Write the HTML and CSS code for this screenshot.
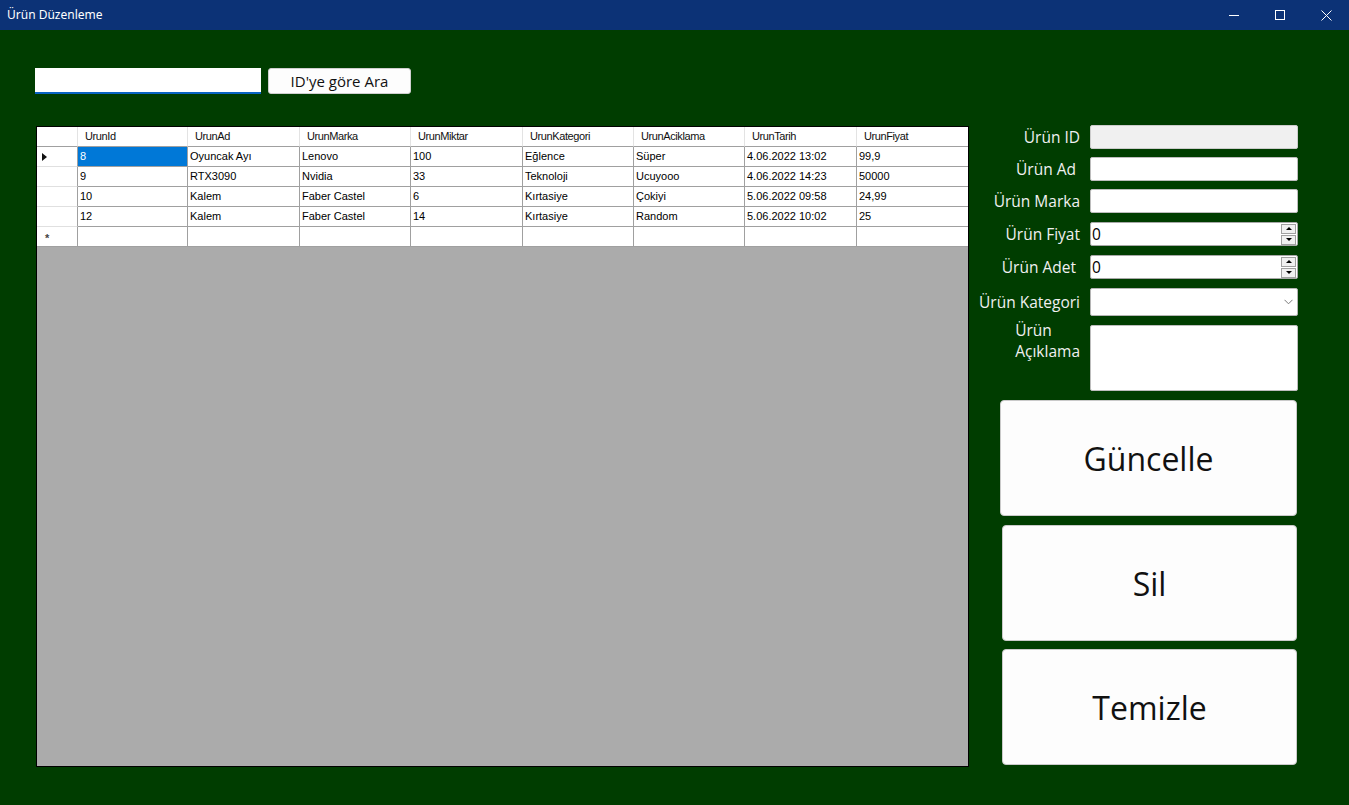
FILE: index.html
```html
<!DOCTYPE html>
<html lang="tr">
<head>
<meta charset="utf-8">
<title>Ürün Düzenleme</title>
<link rel="stylesheet" href="styles.css">
</head>
<body>
<div class="window">
  <div class="titlebar">
    <span class="title">Ürün Düzenleme</span>
    <div class="controls">
      <span class="ctl"><svg width="10" height="10" viewBox="0 0 10 10"><line x1="0" y1="5.5" x2="10" y2="5.5" stroke="#fff" stroke-width="1"/></svg></span>
      <span class="ctl"><svg width="10" height="10" viewBox="0 0 10 10"><rect x="0.5" y="0.5" width="9" height="9" fill="none" stroke="#fff" stroke-width="1"/></svg></span>
      <span class="ctl"><svg width="11" height="11" viewBox="0 0 11 11"><path d="M0.5 0.5 L10.5 10.5 M10.5 0.5 L0.5 10.5" stroke="#fff" stroke-width="1"/></svg></span>
    </div>
  </div>
  <div class="content">
    <div class="searchbar">
      <div class="search-input"></div>
      <button class="search-btn">ID'ye göre Ara</button>
    </div>
    <div class="main">
      <div class="datagrid">
        <div class="row head">
          <div class="cell rh"></div>
          <div class="cell hc">UrunId</div>
          <div class="cell hc">UrunAd</div>
          <div class="cell hc">UrunMarka</div>
          <div class="cell hc">UrunMiktar</div>
          <div class="cell hc">UrunKategori</div>
          <div class="cell hc">UrunAciklama</div>
          <div class="cell hc">UrunTarih</div>
          <div class="cell hc">UrunFiyat</div>
        </div>
        <div class="row">
          <div class="cell rh"><span class="tri"></span></div>
          <div class="cell sel">8</div>
          <div class="cell">Oyuncak Ayı</div>
          <div class="cell">Lenovo</div>
          <div class="cell">100</div>
          <div class="cell">Eğlence</div>
          <div class="cell">Süper</div>
          <div class="cell">4.06.2022 13:02</div>
          <div class="cell">99,9</div>
        </div>
        <div class="row">
          <div class="cell rh"></div>
          <div class="cell">9</div>
          <div class="cell">RTX3090</div>
          <div class="cell">Nvidia</div>
          <div class="cell">33</div>
          <div class="cell">Teknoloji</div>
          <div class="cell">Ucuyooo</div>
          <div class="cell">4.06.2022 14:23</div>
          <div class="cell">50000</div>
        </div>
        <div class="row">
          <div class="cell rh"></div>
          <div class="cell">10</div>
          <div class="cell">Kalem</div>
          <div class="cell">Faber Castel</div>
          <div class="cell">6</div>
          <div class="cell">Kırtasiye</div>
          <div class="cell">Çokiyi</div>
          <div class="cell">5.06.2022 09:58</div>
          <div class="cell">24,99</div>
        </div>
        <div class="row">
          <div class="cell rh"></div>
          <div class="cell">12</div>
          <div class="cell">Kalem</div>
          <div class="cell">Faber Castel</div>
          <div class="cell">14</div>
          <div class="cell">Kırtasiye</div>
          <div class="cell">Random</div>
          <div class="cell">5.06.2022 10:02</div>
          <div class="cell">25</div>
        </div>
        <div class="row">
          <div class="cell rh"><span class="star">*</span></div>
          <div class="cell"></div>
          <div class="cell"></div>
          <div class="cell"></div>
          <div class="cell"></div>
          <div class="cell"></div>
          <div class="cell"></div>
          <div class="cell"></div>
          <div class="cell"></div>
        </div>
      </div>

      <div class="side">
        <div class="field f-id">
          <label class="lbl">Ürün ID</label>
          <div class="box disabled"></div>
        </div>
        <div class="field f-ad">
          <label class="lbl pad">Ürün Ad</label>
          <div class="box"></div>
        </div>
        <div class="field f-marka">
          <label class="lbl">Ürün Marka</label>
          <div class="box"></div>
        </div>
        <div class="field f-fiyat">
          <label class="lbl">Ürün Fiyat</label>
          <div class="box num">
            <span class="val">0</span>
            <span class="spin">
              <span class="sb"><span class="up"></span></span>
              <span class="sb"><span class="dn"></span></span>
            </span>
          </div>
        </div>
        <div class="field f-adet">
          <label class="lbl pad">Ürün Adet</label>
          <div class="box num">
            <span class="val">0</span>
            <span class="spin">
              <span class="sb"><span class="up"></span></span>
              <span class="sb"><span class="dn"></span></span>
            </span>
          </div>
        </div>
        <div class="field f-kat">
          <label class="lbl">Ürün Kategori</label>
          <div class="box combo">
            <svg width="9" height="6" viewBox="0 0 9 6"><path d="M0.5 0.8 L4.5 4.8 L8.5 0.8" fill="none" stroke="#7a7a7a" stroke-width="1"/></svg>
          </div>
        </div>
        <div class="field f-acik">
          <label class="lbl multi">Ürün<br>Açıklama</label>
          <div class="box area"></div>
        </div>
        <button class="big b-guncelle">Güncelle</button>
        <button class="big b-sil">Sil</button>
        <button class="big b-temizle">Temizle</button>
      </div>
    </div>
  </div>
</div>
</body>
</html>
```

FILE: styles.css
```css
* { box-sizing: border-box; }

html, body {
  margin: 0;
  padding: 0;
  width: 1349px;
  height: 805px;
  overflow: hidden;
  background: #003d00;
  font-family: "Open Sans", "Noto Sans", sans-serif;
}

.window {
  width: 1349px;
  height: 805px;
  background: #003d00;
}

.titlebar {
  height: 30px;
  background: #0c3276;
  display: flex;
  align-items: center;
  justify-content: space-between;
  color: #fff;
}

.title {
  padding-left: 7px;
  font-family: "Noto Sans", "DejaVu Sans", sans-serif;
  font-size: 12px;
  line-height: 30px;
}

.controls {
  display: flex;
  height: 30px;
}

.ctl {
  width: 46px;
  height: 30px;
  display: flex;
  align-items: center;
  justify-content: center;
}

.content {
  padding-left: 35px;
}

.searchbar {
  display: flex;
  align-items: flex-start;
  margin-top: 38px;
}

.search-input {
  width: 226px;
  height: 26px;
  background: #fff;
  border-bottom: 2px solid #0a63c4;
}

.search-btn {
  margin-left: 7px;
  width: 143px;
  height: 26px;
  background: #fdfdfd;
  border: 1px solid #cfcfcf;
  border-radius: 3px;
  font-family: "Open Sans", sans-serif;
  font-size: 15px;
  color: #111;
  padding: 0;
  line-height: 24px;
}

.main {
  display: flex;
  align-items: flex-start;
  margin-top: 31px;
}

/* Data grid */
.datagrid {
  margin-left: 1px;
  margin-top: 1px;
  width: 933px;
  height: 641px;
  border: 1px solid #000;
  background: #ababab;
  font-family: "Liberation Sans", Arial, sans-serif;
  font-size: 11px;
  color: #000;
}

.row {
  display: grid;
  grid-template-columns: 41px 110px 112px 111px 112px 111px 111px 112px 111px;
  height: 20px;
  background: #fff;
}

.cell {
  height: 20px;
  border-right: 1px solid #a0a0a0;
  border-bottom: 1px solid #a0a0a0;
  padding-left: 2px;
  line-height: 19px;
  white-space: nowrap;
  overflow: hidden;
}

.cell:last-child {
  border-right: none;
}

.head .cell {
  border-right-color: #e3e3e3;
  border-bottom-color: #a0a0a0;
}

.head .hc {
  padding-left: 7px;
  letter-spacing: -0.4px;
  color: #101010;
}

.rh {
  border-bottom-color: #e0e0e0;
  border-right-color: #a0a0a0;
  position: relative;
}

.row:nth-last-child(1) .rh {
  border-bottom-color: #a0a0a0;
}

.sel {
  background: #0078d7;
  color: #fff;
}

.tri {
  position: absolute;
  left: 5px;
  top: 6px;
  width: 0;
  height: 0;
  border-top: 4px solid transparent;
  border-bottom: 4px solid transparent;
  border-left: 5px solid #111;
}

.star {
  position: absolute;
  left: 8px;
  top: 2px;
  color: #444;
  font-size: 11px;
  font-weight: bold;
}

/* Side panel */
.side {
  margin-left: 3px;
  width: 326px;
  display: flex;
  flex-direction: column;
}

.field {
  display: flex;
  align-items: center;
}

.lbl {
  width: 108px;
  text-align: right;
  color: #f0f0f0;
  font-size: 15.5px;
  white-space: nowrap;
  margin-right: 10px;
}

.lbl.pad {
  padding-right: 4px;
}

.box {
  width: 208px;
  height: 24px;
  background: #fff;
  border: 1px solid #bdbdbd;
  border-radius: 2px;
}

.box.disabled {
  background: #f0f0f0;
  border-color: #cccccc;
}

.f-id, .f-ad { margin-bottom: 8px; }
.f-marka { margin-bottom: 9px; }
.f-fiyat, .f-adet { margin-bottom: 9px; }
.f-kat { margin-bottom: 9px; }
.f-acik { margin-bottom: 9px; align-items: flex-start; }

.box.num {
  display: flex;
  align-items: center;
  justify-content: space-between;
  border-color: #a8a8a8;
}

.val {
  padding-left: 1px;
  font-size: 15.5px;
  color: #000;
  line-height: 22px;
}

.spin {
  display: flex;
  flex-direction: column;
  margin-right: 1px;
  gap: 1px;
}

.sb {
  width: 15px;
  height: 10px;
  background: #f0f0f0;
  border: 1px solid #a0a0a0;
  display: flex;
  align-items: center;
  justify-content: center;
}

.up {
  width: 0;
  height: 0;
  border-left: 3px solid transparent;
  border-right: 3px solid transparent;
  border-bottom: 3px solid #000;
}

.dn {
  width: 0;
  height: 0;
  border-left: 3px solid transparent;
  border-right: 3px solid transparent;
  border-top: 3px solid #000;
}

.box.combo {
  height: 28px;
  display: flex;
  align-items: center;
  justify-content: flex-end;
  padding-right: 4px;
  border-color: #b5b5b5;
}

.box.area {
  height: 66px;
}

.lbl.multi {
  display: flex;
  justify-content: flex-end;
  text-align: left;
  line-height: 21px;
  margin-top: -5px;
}

.big {
  height: 116px;
  background: #fdfdfd;
  border: 1px solid #cacaca;
  border-radius: 4px;
  font-family: "Open Sans", sans-serif;
  font-size: 32px;
  color: #111;
  padding: 0;
}

.b-guncelle {
  margin-left: 28px;
  width: 297px;
  margin-bottom: 9px;
}

.b-sil {
  margin-left: 30px;
  width: 295px;
  margin-bottom: 8px;
}

.b-temizle {
  margin-left: 30px;
  width: 295px;
}
```
